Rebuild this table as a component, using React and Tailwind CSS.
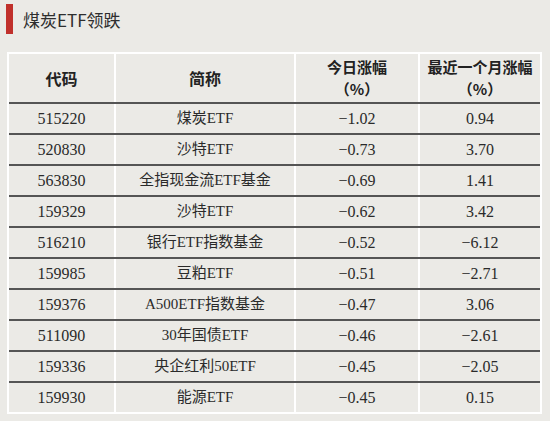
import React from "react";

const rows = [
  ["515220", "煤炭ETF", "−1.02", "0.94"],
  ["520830", "沙特ETF", "−0.73", "3.70"],
  ["563830", "全指现金流ETF基金", "−0.69", "1.41"],
  ["159329", "沙特ETF", "−0.62", "3.42"],
  ["516210", "银行ETF指数基金", "−0.52", "−6.12"],
  ["159985", "豆粕ETF", "−0.51", "−2.71"],
  ["159376", "A500ETF指数基金", "−0.47", "3.06"],
  ["511090", "30年国债ETF", "−0.46", "−2.61"],
  ["159336", "央企红利50ETF", "−0.45", "−2.05"],
  ["159930", "能源ETF", "−0.45", "0.15"],
];

const serif = { fontFamily: '"Liberation Serif", "Noto Sans CJK SC", serif' };

export default function App() {
  return (
    <div className="w-[550px] h-[421px] bg-[#ebeae6] overflow-hidden">
      <div className="flex items-start h-[52px] pt-[4px]">
        <div className="ml-[6px] w-[7px] h-[30px] bg-[#c0302b]" />
        <div
          className="ml-[10px] h-[30px] flex items-center text-[17px] text-[#2e2e2e] leading-none"
          style={{ fontFamily: '"Noto Sans CJK SC", sans-serif' }}
        >
          煤炭ETF领跌
        </div>
      </div>
      <div className="ml-[7px] w-[535px] border-2 border-white" style={serif}>
        <div
          className="flex h-[48px] text-[15px] font-bold text-[#222] leading-[22px]"
          style={{ fontFamily: '"Noto Sans CJK SC", sans-serif' }}
        >
          <div className="w-[105px] flex items-center justify-center text-[16px]">代码</div>
          <div className="w-[180px] border-l-2 border-white flex items-center justify-center text-[16px]">简称</div>
          <div className="w-[124px] border-l-2 border-white flex flex-col items-center justify-center">
            <span>今日涨幅</span>
            <span>（%）</span>
          </div>
          <div className="w-[122px] border-l-2 border-white flex flex-col items-center justify-center">
            <span>最近一个月涨幅</span>
            <span>（%）</span>
          </div>
        </div>
        {rows.map((r, i) => (
          <div
            key={i}
            className="flex h-[31px] border-t-2 border-[#555] text-[#2a2a2a] leading-none"
          >
            <div className="w-[105px] flex items-center justify-center text-[16px]">{r[0]}</div>
            <div className="w-[180px] border-l-2 border-white flex items-center justify-center text-[15px]">{r[1]}</div>
            <div className="w-[124px] border-l-2 border-white flex items-center justify-center text-[16px]">{r[2]}</div>
            <div className="w-[122px] border-l-2 border-white flex items-center justify-center text-[16px]">{r[3]}</div>
          </div>
        ))}
      </div>
    </div>
  );
}
